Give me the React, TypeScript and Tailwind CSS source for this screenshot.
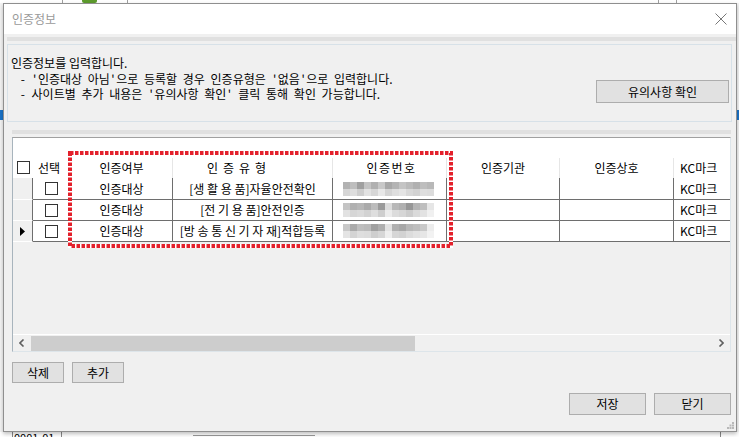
import React from "react";

const font = "font-['Noto_Sans_CJK_KR','Noto_Sans',sans-serif]";

// pixelated blur for the hidden 인증번호 values
const mosaic = [
  [
    [178, 190, 160, 196, 176, 200, 168, 180, 196, 186, 176, 190, 184],
    [214, 222, 206, 226, 214, 232, 212, 222, 228, 216, 210, 222, 220],
  ],
  [
    [196, 176, 182, 170, 188, 154, 220, 184, 176, 150, 180, 190, 230],
    [226, 214, 218, 210, 222, 206, 236, 220, 214, 204, 218, 226, 240],
  ],
  [
    [200, 170, 190, 186, 160, 174, 226, 176, 168, 184, 190, 200, 236],
    [228, 212, 222, 220, 206, 214, 238, 214, 210, 220, 226, 230, 242],
  ],
];

function Blur({ rows }: { rows: number[][] }) {
  return (
    <div className="flex flex-col">
      {rows.map((r, i) => (
        <div key={i} className="flex">
          {r.map((g, j) => (
            <div
              key={j}
              className="w-[7px] h-[7px]"
              style={{ backgroundColor: `rgb(${g},${g},${g})` }}
            />
          ))}
        </div>
      ))}
    </div>
  );
}

function Check() {
  return <div className="w-[13px] h-[13px] border border-[#333] bg-white" />;
}

function Btn({ label, w, h }: { label: string; w: string; h: string }) {
  return (
    <div
      className={`${w} ${h} flex items-center justify-center border border-[#adadad] bg-[#e1e1e1] text-[12px] text-black`}
    >
      {label}
    </div>
  );
}

// half-width quote, wider like the dialog's bitmap font
function Q() {
  return <span className="px-[1.5px]">'</span>;
}

const cols = [
  { key: "yn", w: "w-[102px]", head: "인증여부", cls: "justify-center" },
  { key: "type", w: "w-[160px]", head: "인증유형", cls: "justify-start tracking-[5px] pl-[34px]" },
  { key: "no", w: "w-[114px]", head: "인증번호", cls: "justify-center tracking-[1.5px] pl-[4px]" },
  { key: "org", w: "w-[113px]", head: "인증기관", cls: "justify-center" },
  { key: "co", w: "w-[114px]", head: "인증상호", cls: "justify-center" },
];

const rows = [
  { type: ["[생 활 용 품]", "자율안전확인"], h: "h-[22px]" },
  { type: ["[전 기 용 품]", "안전인증"], h: "h-[21px]" },
  { type: ["[방 송 통 신 기 자 재]", "적합등록"], h: "h-[21px]" },
];

export default function App() {
  return (
    <div className={`relative w-[739px] h-[437px] overflow-hidden bg-[#f4f4f4] ${font}`}>
      {/* window behind the dialog */}
      <div className="absolute left-0 top-0 w-[739px] h-[3px] bg-white" />
      <div className="absolute left-[62px] top-0 w-px h-[3px] bg-[#a0a0a0]" />
      <div className="absolute left-[82px] top-0 w-[15px] h-[3px] rounded-b-[2px] bg-[#5d9b2d]" />
      <div className="absolute left-[127px] top-0 w-px h-[3px] bg-[#a0a0a0]" />
      <div className="absolute left-[658px] top-0 w-px h-[3px] bg-[#a0a0a0]" />
      <div className="absolute left-[676px] top-0 w-px h-[3px] bg-[#a0a0a0]" />
      <div className="absolute left-0 top-[110px] w-[3px] h-[10px] bg-[#1a73c8]" />
      <div className="absolute left-[736px] top-[110px] w-[3px] h-[10px] bg-[#1a73c8]" />
      <div className="absolute left-0 top-[432px] w-[739px] h-[5px] bg-white" />
      <div className="absolute left-[12px] top-[432px] w-[50px] h-[5px] border-l border-r border-[#888]" />
      <div className="absolute left-[14px] top-[430px] text-[11px] leading-[14px] text-black">0001-01</div>
      <div className="absolute left-[193px] top-[435px] w-[122px] h-[2px] border-t border-[#999]" />
      <div className="absolute left-[720px] top-[432px] w-px h-[5px] bg-[#888]" />

      {/* dialog */}
      <div className="absolute left-[3px] top-[3px] w-[734px] h-[429px] border border-[#8f8f8f] bg-[#f0f0f0] shadow-[0_2px_4px_rgba(0,0,0,0.25)] flex flex-col">
        <div className="h-[30px] bg-white flex items-center justify-between pl-[8px] pr-[8px]">
          <span className="text-[12px] text-[#9a9a9a]">인증정보</span>
          <svg width="12" height="12" viewBox="0 0 12 12" className="mr-[1px]">
            <path d="M0.5 0.5 L11.5 11.5 M11.5 0.5 L0.5 11.5" stroke="#777" strokeWidth="1" />
          </svg>
        </div>

        <div className="pt-[3px] flex flex-col flex-1">
          <div className="h-[4px] ml-[3px] bg-[#e0e0e0]" />

          {/* info panel */}
          <div className="mt-[3px] ml-[3px] mr-[4px] h-[78px] border border-[#d7e1e8] flex justify-between">
            <div className="pt-[10px] pl-[3px] text-[12px] leading-[15.5px] text-black whitespace-pre [word-spacing:3px]">
              <div className="[word-spacing:0px]">인증정보를 입력합니다.</div>
              <div className="pl-[3px]">
                {" "}
                <span className="px-[1px]">-</span> <Q />인증대상 아님<Q />으로 등록할 경우 인증유형은 <Q />없음
                <Q />으로 입력합니다.
              </div>
              <div className="pl-[3px]">
                {" "}
                <span className="px-[1px]">-</span> 사이트별 추가 내용은 <Q />유의사항 확인<Q /> 클릭 통해 확인
                가능합니다.
              </div>
            </div>
            <div className="mt-[35px] mr-[2px]">
              <Btn label="유의사항 확인" w="w-[133px]" h="h-[23px]" />
            </div>
          </div>

          <div className="mt-[8px] ml-[8px] w-[719px] h-[4px] bg-[#e0e0e0]" />

          {/* grid */}
          <div className="mt-[3px] ml-[8px] w-[719px] h-[215px] border border-t-[#a0a0a0] border-l-[#a8b4bd] border-r-[#dde5ea] border-b-[#dde5ea] flex flex-col overflow-hidden">
            {/* header */}
            <div className="h-[40px] bg-white flex shrink-0">
              <div className="w-[20px] shrink-0 flex items-end justify-center pb-[4px] pl-[1px]">
                <Check />
              </div>
              <div className="w-[38px] shrink-0 flex flex-col justify-end">
                <div className="h-[20px] flex items-center pl-[5px] text-[12px] text-black">선택</div>
              </div>
              {cols.map((c) => (
                <div key={c.key} className={`${c.w} shrink-0 flex flex-col justify-end`}>
                  <div
                    className={`h-[20px] border-r border-[#e6e6e6] flex items-center text-[12px] text-black ${c.cls}`}
                  >
                    {c.head}
                  </div>
                </div>
              ))}
              <div className="w-[70px] shrink-0 flex flex-col justify-end">
                <div className="h-[20px] flex items-center pl-[6px] text-[12px] text-black">KC마크</div>
              </div>
            </div>

            {/* rows */}
            {rows.map((r, i) => (
              <div key={i} className={`${r.h} flex shrink-0`}>
                <div className="w-[20px] shrink-0 bg-[#f0f0f0] border-r border-[#6e6e6e] border-b border-b-white flex items-center justify-center">
                  {i === 2 && (
                    <svg width="5" height="9" viewBox="0 0 5 9">
                      <path d="M0 0 L5 4.5 L0 9 Z" fill="#000" />
                    </svg>
                  )}
                </div>
                <div className="w-[38px] shrink-0 bg-white border-r border-b border-[#6e6e6e] flex items-center justify-center">
                  <Check />
                </div>
                <div className="w-[102px] shrink-0 bg-white border-r border-b border-[#6e6e6e] flex items-center justify-center text-[12px]">
                  인증대상
                </div>
                <div className="w-[160px] shrink-0 bg-white border-r border-b border-[#6e6e6e] flex items-center justify-center text-[12px] whitespace-pre">
                  {r.type[0]}
                  {r.type[1]}
                </div>
                <div className="w-[114px] shrink-0 bg-white border-r border-b border-[#6e6e6e] flex items-center pl-[10px]">
                  <Blur rows={mosaic[i]} />
                </div>
                <div className="w-[113px] shrink-0 bg-white border-r border-b border-[#6e6e6e]" />
                <div className="w-[114px] shrink-0 bg-white border-r border-b border-[#6e6e6e]" />
                <div className="w-[70px] shrink-0 bg-white border-b border-[#6e6e6e] flex items-center pl-[6px] text-[12px]">
                  KC마크
                </div>
              </div>
            ))}

            <div className="flex-1 bg-[#f0f0f0]" />

            {/* horizontal scrollbar */}
            <div className="h-[17px] shrink-0 border-t border-white bg-[#f0f0f0] flex items-center">
              <div className="w-[18px] flex items-center justify-center">
                <svg width="6" height="8" viewBox="0 0 6 8">
                  <path d="M4.5 0.5 L1 4 L4.5 7.5" stroke="#606060" strokeWidth="1.6" fill="none" />
                </svg>
              </div>
              <div className="w-[384px] h-[15px] bg-[#cdcdcd]" />
              <div className="flex-1" />
              <div className="w-[18px] flex items-center justify-center">
                <svg width="6" height="8" viewBox="0 0 6 8">
                  <path d="M1.5 0.5 L5 4 L1.5 7.5" stroke="#606060" strokeWidth="1.6" fill="none" />
                </svg>
              </div>
            </div>
          </div>

          {/* delete / add */}
          <div className="mt-[10px] ml-[8px] flex gap-[8px]">
            <Btn label="삭제" w="w-[52px]" h="h-[21px]" />
            <Btn label="추가" w="w-[52px]" h="h-[21px]" />
          </div>

          {/* save / close */}
          <div className="mt-[10px] mr-[5px] flex justify-end gap-[8px]">
            <Btn label="저장" w="w-[77px]" h="h-[22px]" />
            <Btn label="닫기" w="w-[77px]" h="h-[22px]" />
          </div>

          <div className="flex-1 flex items-end justify-end pr-[2px] pb-[2px]">
            <svg width="7" height="7" viewBox="0 0 7 7">
              <rect x="5" y="0" width="2" height="2" fill="#b8b8b8" />
              <rect x="2.5" y="2.5" width="2" height="2" fill="#b8b8b8" />
              <rect x="5" y="2.5" width="2" height="2" fill="#b8b8b8" />
              <rect x="0" y="5" width="2" height="2" fill="#b8b8b8" />
              <rect x="2.5" y="5" width="2" height="2" fill="#b8b8b8" />
              <rect x="5" y="5" width="2" height="2" fill="#b8b8b8" />
            </svg>
          </div>
        </div>
      </div>

      {/* red dotted highlight drawn over the grid */}
      <svg className="absolute left-[68px] top-[151px]" width="385" height="97" viewBox="0 0 385 97">
        <rect x="2" y="2" width="381" height="93" fill="none" stroke="#fff" strokeWidth="4" />
        <rect x="2" y="2" width="381" height="93" fill="none" stroke="#e3202b" strokeWidth="4" strokeDasharray="3.5 1.5" />
      </svg>
    </div>
  );
}
